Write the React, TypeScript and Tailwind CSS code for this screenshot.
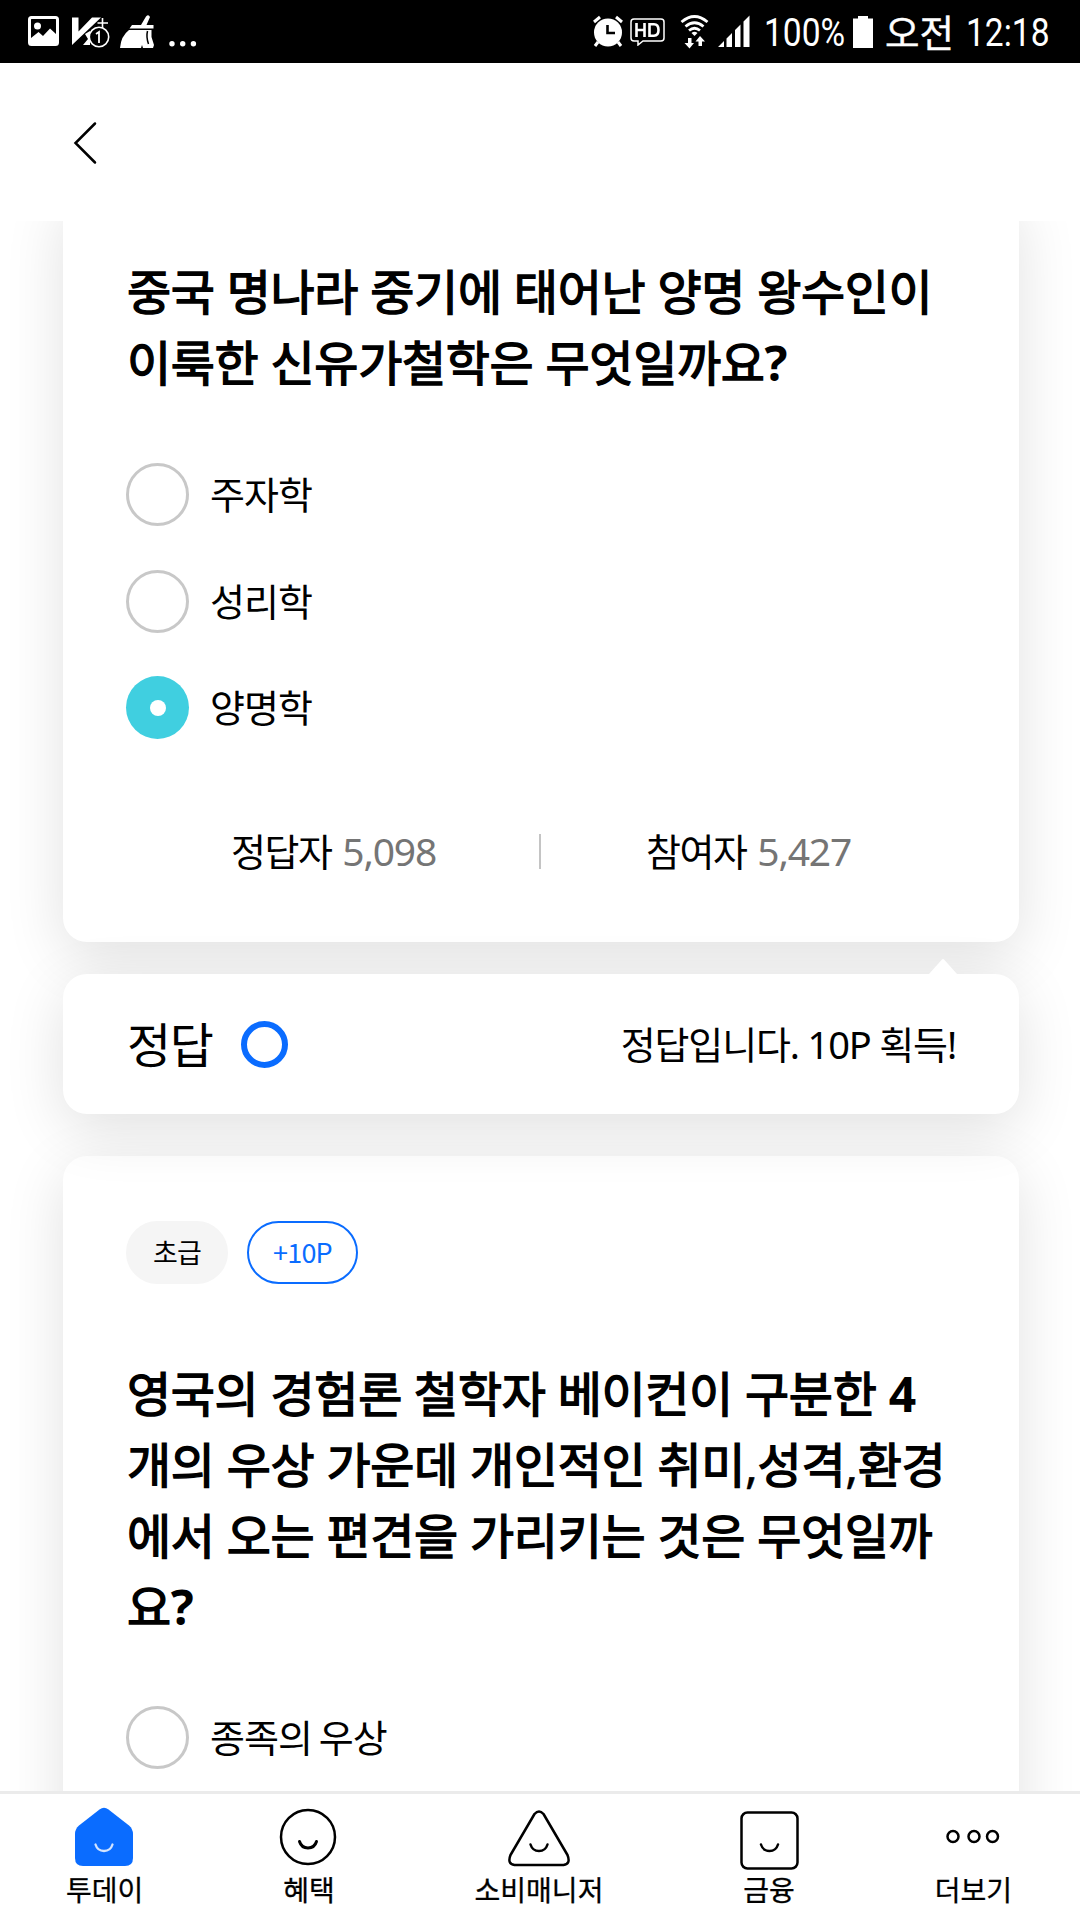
import type { ReactNode } from 'react';

const SHADOW = 'shadow-[0_15px_60px_rgba(0,0,0,0.12)]';
const TITLE =
  "pl-px font-['Noto_Sans','Noto_Sans_CJK_KR',sans-serif] text-[48px] leading-[71px] font-normal tracking-[-0.35px] whitespace-nowrap [-webkit-text-stroke:1.400px_black]";

function StatusBar() {
  return (
    <header className="relative z-20 flex h-[63px] shrink-0 items-start bg-black pr-[31px] pl-7 text-white">
      <svg className="mt-4 h-[30px] w-[31px]" viewBox="0 0 31 30" fill="none">
        <rect x="1.5" y="1.5" width="28" height="27" rx="2" stroke="white" strokeWidth="3" />
        <circle cx="9.5" cy="10" r="3.5" fill="white" />
        <path d="M3 22 L10.5 16 L15 20 L22 12.500 L28 18 V28 H3Z" fill="white" />
      </svg>
      <svg className="mt-4 ml-[13px] h-8 w-[38px]" viewBox="0 0 38 32" fill="none">
        <path d="M0 1.500 H6.500 V15.500 L20 1.500 H29 L0 29Z" fill="white" />
        <path d="M13 18 L18 15 V29 H11 L16 23Z" fill="white" />
        <path d="M30.500 2 V12 M25.500 7 H36" stroke="white" strokeWidth="1.600" />
        <circle cx="27" cy="21" r="9.700" fill="black" stroke="white" strokeWidth="1.600" />
        <path d="M24 18 L27 16 V27" stroke="white" strokeWidth="1.800" />
      </svg>
      <svg className="mt-[15px] ml-[10px] h-[34px] w-[35px]" viewBox="0 0 35 34" fill="white">
        <path d="M21 10 L26 1.500 Q28.500 -1 30 2 L26.500 10 H33.500 V13.500 H9.500 L12 10Z" />
        <path d="M9 15 H31.500 V22 L34 30 L33 33 H23 L22 30 L21 33 H0 Q1 21 9 15Z" />
        <path d="M27.500 16 Q26 22 28.500 29" stroke="black" strokeWidth="1.500" fill="none" />
      </svg>
      <svg className="mt-10 ml-[14px] h-2 w-7" viewBox="0 0 28 8" fill="white">
        <circle cx="3" cy="3.700" r="2.700" /><circle cx="13.700" cy="3.700" r="2.700" /><circle cx="24.400" cy="3.700" r="2.700" />
      </svg>

      <svg className="mt-[15px] ml-auto h-8 w-8" viewBox="0 0 32 32" fill="none">
        <circle cx="16" cy="17.500" r="14" fill="white" />
        <path d="M2 7 L8 2 M30 7 L24 2" stroke="white" strokeWidth="3" />
        <path d="M6 27 L3 31 M26 27 L29 31" stroke="white" strokeWidth="3" />
        <path d="M15.500 10 V18 H23" stroke="black" strokeWidth="2.600" />
      </svg>
      <svg className="mt-[18px] ml-[6px] h-7 w-[35px]" viewBox="0 0 35 28" fill="none" stroke="white">
        <path d="M4 1 H31 Q34 1 34 4 V20 Q34 23 31 23 H13 L8 27 V23 H4 Q1 23 1 20 V4 Q1 1 4 1Z" strokeWidth="1.500" />
        <path d="M6.500 5 V19 M14.500 5 V19 M6.500 12 H14.500" strokeWidth="2.600" />
        <path d="M19.500 6.300 V17.700 H24 Q28.500 17.700 28.500 12 Q28.500 6.300 24 6.300Z" strokeWidth="2.600" />
      </svg>
      <svg className="mt-[15px] ml-[15px] h-[34px] w-[29px]" viewBox="0 0 29 34" fill="none" stroke="white" strokeWidth="2.800">
        <path d="M1.500 7 Q14.500 -4 27.500 7 M5.500 11.500 Q14.500 4 23.500 11.500 M9 15.500 Q14.500 11 20 15.500" />
        <path d="M11.500 18 Q14.500 15.500 17.500 18 L14.500 21Z" fill="white" stroke="none" />
        <path d="M8 23 H11.500 V28 H14 L9.500 33.500 L4.500 28 H8Z M18.500 31 H22 V26.500 H25 L20 21 L15.500 26.500 H18.500Z" fill="white" stroke="none" />
      </svg>
      <svg className="mt-[15px] ml-[9px] h-8 w-8" viewBox="0 0 32 32" fill="white">
        <path d="M0 32 L6 26 V32Z M8.500 23.500 L14 18 V32 H8.500Z M17 15 L22.500 9.500 V32 H17Z M25.500 6.500 L31.500 0.500 V32 H25.500Z" />
      </svg>
      <span className="mt-[9px] ml-[14px] inline-block w-[82px] origin-left scale-x-[0.86] font-['Roboto',sans-serif] text-[39px] leading-[48px] whitespace-nowrap">100%</span>
      <svg className="mt-4 ml-[7px] h-8 w-5" viewBox="0 0 20 32" fill="white">
        <path d="M5 0 H15 V2.500 H20 V32 H0 V2.500 H5Z" />
      </svg>
      <span className="mt-[6px] ml-[12px] inline-block w-[73px] font-['Noto_Sans_CJK_KR',sans-serif] text-[37.500px] leading-[50px] whitespace-nowrap [-webkit-text-stroke:0.400px_white]">오전</span>
      <span className="mt-[9px] ml-[8px] inline-block w-[83px] origin-left scale-x-[0.86] font-['Roboto',sans-serif] text-[39px] leading-[48px] whitespace-nowrap">12:18</span>
    </header>
  );
}

function Option({ label, selected }: { label: string; selected?: boolean }) {
  return (
    <li className="flex h-[63px] items-center gap-[21px]">
      {selected ? (
        <span className="flex size-[63px] items-center justify-center rounded-full bg-[#40cfe0]">
          <span className="size-4 rounded-full bg-white" />
        </span>
      ) : (
        <span className="size-[63px] rounded-full border-[3px] border-[#c8c8c8]" />
      )}
      <span className="mb-px font-['Noto_Sans','Noto_Sans_CJK_KR',sans-serif] text-[38px] leading-[56px] tracking-[-1px] whitespace-nowrap [word-spacing:-2px]">{label}</span>
    </li>
  );
}

function Stat({ label, value }: { label: string; value: string }) {
  return (
    <div className="flex-1 pl-[2px] text-center whitespace-nowrap">
      <span className="text-[38px] tracking-[-1.500px]">{label}</span> <span className="ml-[2px] text-[#757575]">{value}</span>
    </div>
  );
}

function Bold({ children }: { children: string }) {
  return <span className="font-bold [-webkit-text-stroke:0px]">{children}</span>;
}

function Thin({ children }: { children: string }) {
  return <span className="[-webkit-text-stroke:0.500px_black]">{children}</span>;
}

const smile = 'M-8.500 -3 Q-6.500 3.500 0 3.500 Q6.500 3.500 8.500 -3';

function NavItem({ label, children }: { label: string; children: ReactNode }) {
  return (
    <div className="flex flex-col items-center whitespace-nowrap">
      <div className="mr-px flex h-[68px] w-0 justify-center">
        <svg className="h-[68px] w-[68px] shrink-0" viewBox="0 0 68 68" fill="none" stroke="black" strokeWidth="2.500" strokeLinecap="round" strokeLinejoin="round">
          {children}
        </svg>
      </div>
      <span className="-mt-[2px] text-[28px] leading-[40px] [-webkit-text-stroke:0.300px_black]">{label}</span>
    </div>
  );
}

export default function App() {
  return (
    <div className="flex h-[1920px] w-[1080px] flex-col overflow-hidden bg-white font-['Noto_Sans','Noto_Sans_CJK_KR',sans-serif] text-black">
      <StatusBar />
      <div className="flex h-[158px] shrink-0 items-center pl-[73px]">
        <svg className="mt-[2px] h-11 w-[26px]" viewBox="0 0 26 44" fill="none" stroke="black" strokeWidth="2.500" strokeLinecap="round">
          <path d="M22 2.500 L2.500 22 L22 41.500" />
        </svg>
      </div>

      <main className="h-[1570px] shrink-0 overflow-hidden pr-[61px] pl-[63px]">
        <section className={`-mt-[30px] h-[751px] rounded-[24px] bg-white px-[63px] pt-[65px] ${SHADOW}`}>
          <h2 className={TITLE}>중국 명나라 중기에 태어난 양명 왕수인이<br />이룩한 신유가철학은 무엇일까요<Bold>?</Bold></h2>
          <ul className="mt-[65px] flex flex-col gap-[43.500px]">
            <Option label="주자학" />
            <Option label="성리학" />
            <Option label="양명학" selected />
          </ul>
          <div className="mt-[84px] mr-[2px] flex items-center text-[39px] leading-[56px] tracking-[-1.200px]">
            <Stat label="정답자" value="5,098" />
            <span className="h-[35px] w-[2px] bg-[#c4c4c4]" />
            <Stat label="참여자" value="5,427" />
          </div>
        </section>

        <section className={`relative z-10 mt-8 flex h-[140px] items-center rounded-[24px] bg-white px-[63px] ${SHADOW}`}>
          <svg className="absolute -top-[15px] right-[62px] h-[15px] w-7" viewBox="0 0 28 15" fill="white"><path d="M0 15 L13 0.500 Q14 -0.500 15 0.500 L28 15Z" /></svg>
          <span className="mt-[2px] ml-px text-[48px] leading-[70px] tracking-[-1.500px]">정답</span>
          <span className="ml-[29px] size-[47px] rounded-full border-[6px] border-[#0a6cff]" />
          <span className="ml-auto text-[38px] leading-[56px] tracking-[-1.150px]">정답입니다. 10P 획득!</span>
        </section>

        <section className={`mt-[42px] h-[760px] rounded-[24px] bg-white px-[63px] pt-[65px] ${SHADOW}`}>
          <div className="flex h-[63px] gap-[19px] font-['Noto_Sans_CJK_KR',sans-serif] text-[27px] leading-[57px] tracking-[-0.8px]">
            <span className="w-[102px] rounded-full border-2 border-[#f5f5f5] bg-[#f5f5f5] text-center">초급</span>
            <span className="w-[111px] rounded-full border-2 border-[#0a6cff] text-center text-[#0a6cff]">+10P</span>
          </div>
          <h2 className={`mt-[74px] ${TITLE}`}>영국의 경험론 철학자 베이컨이 구분한 <Bold>4</Bold><br />개의 우상 가운데 개인적인 취미<Thin>,</Thin>성격<Thin>,</Thin>환경<br />에서 오는 편견을 가리키는 것은 무엇일까<br />요<Bold>?</Bold></h2>
          <ul className="mt-[64px]">
            <Option label="종족의 우상" />
          </ul>
        </section>
      </main>

      <nav className="relative z-20 flex h-[129px] shrink-0 justify-between border-t-[3px] border-[#ebebeb] bg-white pt-[9px] pr-[68px] pl-[66px] font-['Noto_Sans_CJK_KR',sans-serif]">
        <NavItem label="투데이">
          <path d="M29.500 6.500 Q34 3 38.500 6.500 L59 22.500 Q63 26 63 31 V55 Q63 63 55 63 H13 Q5 63 5 55 V31 Q5 26 9 22.500Z" fill="#0a6cff" stroke="none" />
          <path d={smile} transform="translate(34 44.500)" stroke="#d3e4ff" strokeWidth="2.300" />
        </NavItem>
        <NavItem label="혜택">
          <circle cx="34" cy="34" r="27" />
          <path d={smile} transform="translate(34 41.500)" strokeWidth="3" />
        </NavItem>
        <NavItem label="소비매니저">
          <path d="M29.500 11 Q34 6 38.500 11 L62.500 52 Q66 61 58.500 62 H9.500 Q2 61 5.500 52Z" />
          <path d={smile} transform="translate(34 44.500)" />
        </NavItem>
        <NavItem label="금융">
          <rect x="6.500" y="9.500" width="56" height="56" rx="6" />
          <path d={smile} transform="translate(34.500 44.500)" />
        </NavItem>
        <NavItem label="더보기">
          <circle cx="14" cy="33.500" r="5.500" />
          <circle cx="35" cy="33.500" r="5.500" />
          <circle cx="53.500" cy="33.500" r="5.500" />
        </NavItem>
      </nav>
    </div>
  );
}
